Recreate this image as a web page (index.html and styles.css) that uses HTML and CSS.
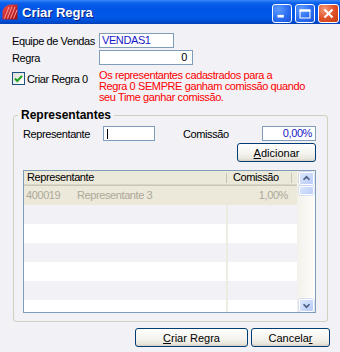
FILE: index.html
```html
<!DOCTYPE html>
<html lang="pt">
<head>
    <meta charset="UTF-8">
    <title>Criar Regra</title>
    <link rel="stylesheet" href="styles.css">
</head>
<body>
    <div class="window">
        <header class="titlebar">
            <svg class="app-icon" viewBox="0 0 16 16">
                <defs>
                    <linearGradient id="ig" x1="0" y1="0" x2="1" y2="1">
                        <stop offset="0" stop-color="#F25050"/>
                        <stop offset="1" stop-color="#9E0A0A"/>
                    </linearGradient>
                </defs>
                <path d="M0.5 15.5 L0.5 7 Q3 0.5 9 0.5 L15.5 0.5 L15.5 15.5 Z" fill="url(#ig)"/>
                <path d="M2.5 14.5 L7 3 M5.5 14.5 L10 2.5 M8.5 14.5 L13 3 M11.5 14.5 L15 6" stroke="#FF9C9C" stroke-width="1" fill="none"/>
            </svg>
            <span class="title">Criar Regra</span>
            <div class="controls">
                <span class="ctl">
                    <svg viewBox="0 0 20 19"><rect x="5" y="11" width="7" height="3" fill="#fff"/></svg>
                </span>
                <span class="ctl">
                    <svg viewBox="0 0 20 19"><path d="M4.5 5.5 H15.5 V14.5 H4.5 Z" fill="none" stroke="#fff" stroke-width="1.2"/><rect x="4" y="5" width="12" height="2.5" fill="#fff"/></svg>
                </span>
                <span class="ctl close">
                    <svg viewBox="0 0 21 19"><path d="M6 5 L15 14 M15 5 L6 14" stroke="#fff" stroke-width="2.2" fill="none"/></svg>
                </span>
            </div>
        </header>

        <main class="content">
            <div class="field">
                <label>Equipe de Vendas</label>
                <span class="input team">VENDAS1</span>
            </div>
            <div class="field">
                <label>Regra</label>
                <span class="input rule">0</span>
            </div>

            <div class="check-row">
                <div class="check">
                    <span class="box">
                        <svg viewBox="0 0 11 11"><path d="M2 5.5 L4.3 8 L9 2.8" stroke="#21A121" stroke-width="2" fill="none"/></svg>
                    </span>
                    <span>Criar Regra 0</span>
                </div>
                <p class="note">Os representantes cadastrados para a<br>Regra 0 SEMPRE ganham comissão quando<br>seu Time ganhar comissão.</p>
            </div>

            <fieldset class="group">
                <legend>Representantes</legend>
                <div class="rep-row">
                    <label class="lbl-rep">Representante</label>
                    <span class="input rep"><span class="caret"></span></span>
                    <label class="lbl-com">Comissão</label>
                    <span class="input com">0,00%</span>
                </div>
                <div class="add-row">
                    <button class="btn add"><u>A</u>dicionar</button>
                </div>

                <div class="grid">
                    <div class="grid-main">
                        <div class="grid-head">
                            <span class="col-rep">Representante</span>
                            <span class="col-com">Comissão</span>
                        </div>
                        <div class="grid-row sel">
                            <span class="col-rep"><span class="code">400019</span>Representante 3</span>
                            <span class="col-com">1,00%</span>
                        </div>
                        <div class="grid-row alt"><span class="col-rep"></span><span class="col-com"></span></div>
                        <div class="grid-row"><span class="col-rep"></span><span class="col-com"></span></div>
                        <div class="grid-row alt"><span class="col-rep"></span><span class="col-com"></span></div>
                        <div class="grid-row"><span class="col-rep"></span><span class="col-com"></span></div>
                        <div class="grid-row alt"><span class="col-rep"></span><span class="col-com"></span></div>
                        <div class="grid-row"><span class="col-rep"></span><span class="col-com"></span></div>
                    </div>
                    <div class="scrollbar">
                        <span class="sb-btn">
                            <svg viewBox="0 0 15 13"><path d="M4 8 L7.5 4.5 L11 8" stroke="#4D6185" stroke-width="2" fill="none"/></svg>
                        </span>
                        <span class="sb-thumb"></span>
                        <span class="sb-track"></span>
                        <span class="sb-btn">
                            <svg viewBox="0 0 15 13"><path d="M4 5 L7.5 8.5 L11 5" stroke="#4D6185" stroke-width="2" fill="none"/></svg>
                        </span>
                    </div>
                </div>
            </fieldset>

            <div class="actions">
                <button class="btn create"><u>C</u>riar Regra</button>
                <button class="btn cancel">Cancela<u>r</u></button>
            </div>
        </main>
    </div>
</body>
</html>
```

FILE: styles.css
```css
* {
    box-sizing: border-box;
}

body {
    margin: 0;
    width: 340px;
    height: 352px;
    overflow: hidden;
    background: #F1F1F6;
    font-family: "Liberation Sans", Arial, sans-serif;
    font-size: 11px;
    letter-spacing: -0.4px;
    color: #000;
}

.window {
    width: 340px;
    height: 352px;
    display: flex;
    flex-direction: column;
}

/* Title bar */
.titlebar {
    height: 24px;
    flex: none;
    display: flex;
    align-items: center;
    padding: 0 1px 0 2px;
    background: linear-gradient(to bottom,
        #3A86F8 0,
        #0B61EC 3px,
        #0055E5 8px,
        #0058EA 17px,
        #004FD6 21px,
        #0040B8 24px);
}

.app-icon {
    width: 16px;
    height: 16px;
    margin-right: 4px;
}

.title {
    flex: 1;
    color: #fff;
    font-weight: bold;
    font-size: 13px;
    letter-spacing: 0;
    text-shadow: 1px 1px #0A1F80;
}

.controls {
    display: flex;
    gap: 3px;
    align-self: flex-start;
    margin-top: 4px;
}

.ctl {
    width: 20px;
    height: 19px;
    border: 1px solid #fff;
    border-radius: 3px;
    background: radial-gradient(circle at 30% 25%, #5D9BFF 0, #2C6EF2 55%, #1C55D8 100%);
}

.ctl svg {
    display: block;
    width: 100%;
    height: 100%;
}

.ctl.close {
    width: 21px;
    background: radial-gradient(circle at 30% 25%, #F39A7A 0, #E0532A 50%, #C63A12 100%);
}

/* Form */
.content {
    flex: 1;
    padding: 9px 12px 0 12px;
}

.field {
    display: flex;
    align-items: center;
    height: 15px;
}

.field + .field {
    margin-top: 2px;
}

.field label {
    width: 87px;
}

.input {
    display: block;
    height: 15px;
    line-height: 13px;
    background: #fff;
    border: 1px solid #7F9DB9;
    padding: 0 3px;
    white-space: nowrap;
}

.input.team {
    width: 75px;
    padding-left: 2px;
    color: #1818C8;
}

.input.rule {
    width: 94px;
    text-align: right;
    padding-right: 5px;
}

.check-row {
    display: flex;
    margin-top: 5px;
}

.check {
    width: 87px;
    height: 13px;
    margin-top: 2px;
    display: flex;
    align-items: center;
    gap: 2px;
}

.box {
    width: 13px;
    height: 13px;
    border: 1px solid #1C5180;
    background: linear-gradient(135deg, #DCDCD7, #FFFFFF);
}

.box svg {
    display: block;
    width: 11px;
    height: 11px;
}

.note {
    margin: 0;
    color: #FF0000;
    line-height: 11px;
}

/* Group box */
.group {
    margin: 6px 0 0 1px;
    padding: 4px 11px 8px 9px;
    border: 1px solid #D0D0BF;
    border-radius: 3px;
    min-width: 0;
}

.group legend {
    font-weight: bold;
    font-size: 12px;
    line-height: 13px;
    letter-spacing: 0;
    padding: 0 3px;
    margin-left: -5px;
}

.rep-row {
    display: flex;
    align-items: center;
    height: 15px;
}

.lbl-rep {
    width: 80px;
}

.input.rep {
    width: 52px;
    padding: 2px 0 0 3px;
}

.caret {
    display: block;
    width: 1px;
    height: 10px;
    background: #000;
}

.lbl-com {
    width: 79px;
    margin-left: 28px;
}

.input.com {
    width: 54px;
    text-align: right;
    color: #1818C8;
    padding-right: 3px;
}

.add-row {
    display: flex;
    justify-content: flex-end;
    margin-top: 2px;
}

/* Buttons */
.btn {
    height: 19px;
    padding: 0;
    border: 1px solid #003C74;
    border-radius: 3px;
    background: linear-gradient(to bottom, #FFFFFF 0, #F5F4EF 55%, #E9E7DE 85%, #D6D0C3 100%);
    font: inherit;
    color: #000;
}

.btn u {
    text-decoration: underline;
}

.btn.add {
    width: 79px;
}

/* Grid */
.grid {
    display: flex;
    height: 143px;
    margin-top: 8px;
    border: 1px solid #7F9DB9;
    background: #fff;
    overflow: hidden;
}

.grid-main {
    flex: 1;
    display: flex;
    flex-direction: column;
    overflow: hidden;
}

.grid-head {
    display: flex;
    height: 15px;
    flex: none;
    background: #EBE9DA;
    box-shadow: inset 0 -1px #CBC7B8, inset 0 -2px #D9D5C6;
    line-height: 13px;
}

.grid-head .col-rep,
.grid-head .col-com {
    padding-left: 3px;
    background: linear-gradient(#C7C4B3, #C7C4B3) right 1px top 2px / 1px 10px no-repeat;
}

.col-rep {
    width: 204px;
    flex: none;
}

.col-com {
    width: 65px;
    flex: none;
}

.grid-head .col-com {
    padding-left: 5px;
}

.grid-row {
    display: flex;
    height: 19px;
    flex: none;
    line-height: 19px;
    background: #fff;
}

.grid-row.alt {
    background: #F2F2F6;
}

.grid-row .col-rep {
    border-right: 2px solid #EEECE2;
}

.grid-row.sel {
    background: #ECE9DA;
    color: #ACA899;
}

.grid-row.sel .col-rep {
    border-right-color: transparent;
    padding-left: 2px;
}

.grid-row.sel .col-com {
    text-align: right;
    padding-right: 5px;
}

.code {
    display: inline-block;
    width: 51px;
}

.scrollbar {
    width: 18px;
    flex: none;
    display: flex;
    flex-direction: column;
    padding: 1px 1px 0 2px;
    background: linear-gradient(to right, #F3F1EA, #FDFDFB);
}

.sb-btn,
.sb-thumb {
    display: block;
    border: 1px solid #fff;
    border-radius: 2px;
    background: linear-gradient(135deg, #DCE6FD, #B8CCF7);
    box-shadow: 0 0 0 0.5px #B5C6EE;
}

.sb-btn {
    height: 13px;
}

.sb-btn svg {
    display: block;
    width: 100%;
    height: 100%;
}

.sb-thumb {
    height: 9px;
    margin-top: 1px;
}

.sb-track {
    flex: 1;
}

/* Bottom actions */
.actions {
    display: flex;
    justify-content: flex-end;
    gap: 3px;
    margin: 6px -2px 0 0;
}

.btn.create {
    width: 113px;
}

.btn.cancel {
    width: 79px;
}
```
